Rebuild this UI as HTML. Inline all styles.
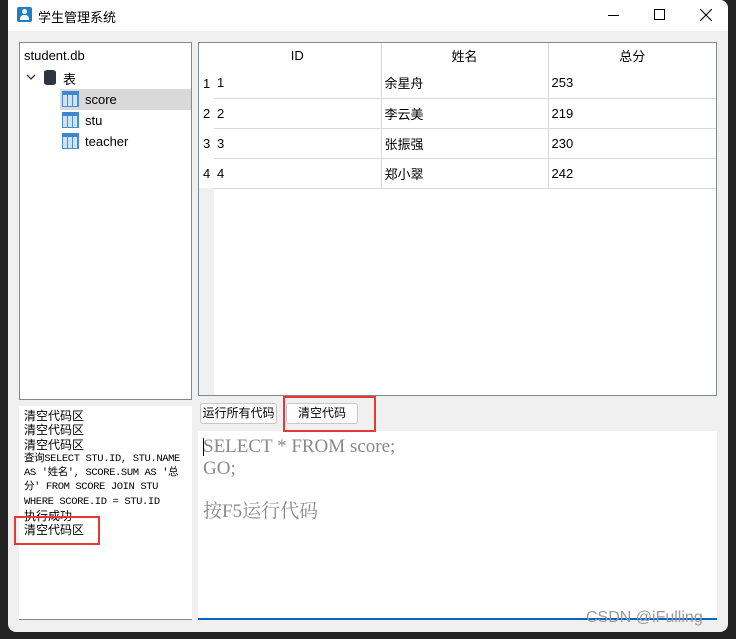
<!DOCTYPE html><html><head><meta charset="utf-8"><style>
*{margin:0;padding:0;box-sizing:border-box}
body{width:736px;height:639px;background:#232323;position:relative;overflow:hidden;font-family:"Liberation Sans","Noto Sans CJK SC",sans-serif;font-size:13px;color:#000}
.win{position:absolute;left:8px;top:0;width:720px;height:632px;background:#f0f0f0;border-radius:0 8px 8px 8px}
.title{position:absolute;left:0;top:0;width:720px;height:31px;background:#fff;border-radius:0 8px 0 0}
.a{position:absolute}
.mono div{height:14.25px;line-height:14.25px;white-space:nowrap;font-size:12px}
.mono div.m{font-family:"Liberation Mono","Noto Sans CJK SC",monospace;font-size:10.5px;letter-spacing:-0.4px}
.red{position:absolute;border:2px solid #e83737}
table{border-collapse:collapse}
</style></head><body>
<div class="win">
<div class="title">
 <div class="a" style="left:9px;top:7px;width:15px;height:15px;background:#1e7fc4;border-radius:2px"><div class="a" style="left:5px;top:2px;width:5px;height:5px;background:#fff;border-radius:50%"></div><div class="a" style="left:3px;top:8px;width:9px;height:5px;background:#fff;border-radius:4px 4px 0 0"></div></div>
 <div class="a" style="left:30px;top:7px;font-size:13px">学生管理系统</div>
 <div class="a" style="left:600px;top:15px;width:11px;height:1px;background:#000"></div>
 <div class="a" style="left:646px;top:9px;width:11px;height:11px;border:1px solid #000"></div>
 <svg class="a" style="left:692px;top:9px" width="12" height="12"><path d="M0 0L12 12M12 0L0 12" stroke="#000" stroke-width="1.1"/></svg>
</div>
</div>
<!-- tree -->
<div class="a" style="left:19px;top:42px;width:173px;height:358px;background:#fff;border:1px solid #828790">
 <div class="a" style="left:4px;top:5px">student.db</div>
 <svg class="a" style="left:6px;top:31px" width="10" height="6"><path d="M1 1L5 5L9 1" stroke="#333" fill="none" stroke-width="1.3"/></svg>
 <div class="a" style="left:24px;top:27px;width:12px;height:15px;background:#2d3440;border-radius:4px/2px"></div>
 <div class="a" style="left:43px;top:26px">表</div>
 <div class="a" style="left:40px;top:46px;width:131px;height:21px;background:#d9d9d9"></div>
 <div class="a" style="left:42px;top:48px;width:17px;height:16px;border:1px solid #4a8fd4;background:repeating-linear-gradient(90deg,#cfe3f7 0 4px,#4a8fd4 4px 5px);border-top:4px solid #3f86d0"></div><div class="a" style="left:65px;top:49px">score</div>
 <div class="a" style="left:42px;top:69px;width:17px;height:16px;border:1px solid #4a8fd4;background:repeating-linear-gradient(90deg,#cfe3f7 0 4px,#4a8fd4 4px 5px);border-top:4px solid #3f86d0"></div><div class="a" style="left:65px;top:70px">stu</div>
 <div class="a" style="left:42px;top:90px;width:17px;height:16px;border:1px solid #4a8fd4;background:repeating-linear-gradient(90deg,#cfe3f7 0 4px,#4a8fd4 4px 5px);border-top:4px solid #3f86d0"></div><div class="a" style="left:65px;top:91px">teacher</div>
</div>
<!-- table -->
<div class="a" style="left:198px;top:42px;width:519px;height:354px;background:#fff;border:1px solid #828790">
 <div class="a" style="left:0;top:0;width:15px;height:352px;background:#f0f0f0"></div>
 <div class="a" style="left:0;top:0;width:15px;height:145px;background:#fff"></div>
 <div class="a" style="left:4px;top:26px;font-size:13px;line-height:30px">1<br>2<br>3<br>4</div>
 <table class="a" style="left:15px;top:0;width:502px">
  <tr style="height:25px"><td style="width:167px;text-align:center;border-right:1px solid #d8d8d8">ID</td><td style="width:167px;text-align:center;border-right:1px solid #d8d8d8">姓名</td><td style="text-align:center">总分</td></tr>
  <tr style="height:30px;border-bottom:1px solid #d8d8d8"><td style="padding-left:3px;border-right:1px solid #d8d8d8">1</td><td style="padding-left:3px;border-right:1px solid #d8d8d8">余星舟</td><td style="padding-left:3px">253</td></tr>
  <tr style="height:30px;border-bottom:1px solid #d8d8d8"><td style="padding-left:3px;border-right:1px solid #d8d8d8">2</td><td style="padding-left:3px;border-right:1px solid #d8d8d8">李云美</td><td style="padding-left:3px">219</td></tr>
  <tr style="height:30px;border-bottom:1px solid #d8d8d8"><td style="padding-left:3px;border-right:1px solid #d8d8d8">3</td><td style="padding-left:3px;border-right:1px solid #d8d8d8">张振强</td><td style="padding-left:3px">230</td></tr>
  <tr style="height:30px;border-bottom:1px solid #d8d8d8"><td style="padding-left:3px;border-right:1px solid #d8d8d8">4</td><td style="padding-left:3px;border-right:1px solid #d8d8d8">郑小翠</td><td style="padding-left:3px">242</td></tr>
 </table>
</div>
<!-- log -->
<div class="a mono" style="left:19px;top:406px;width:173px;height:214px;background:#fff;border-bottom:1px solid #828790;padding:3px 0 0 5px;overflow:hidden">
<div>清空代码区</div><div>清空代码区</div><div>清空代码区</div>
<div class="m">查询SELECT STU.ID, STU.NAME</div>
<div class="m">AS '姓名', SCORE.SUM AS '总</div>
<div class="m">分' FROM SCORE JOIN STU</div>
<div class="m">WHERE SCORE.ID = STU.ID</div>
<div>执行成功</div><div>清空代码区</div></div>
<!-- buttons -->
<div class="a" style="left:200px;top:403px;width:77px;height:21px;background:#fdfdfd;border:1px solid #c8c8c8;border-radius:3px;font-size:12px;text-align:center;line-height:19px">运行所有代码</div>
<div class="a" style="left:286px;top:403px;width:72px;height:21px;background:#fdfdfd;border:1px solid #c8c8c8;border-radius:3px;font-size:12px;text-align:center;line-height:19px">清空代码</div>
<!-- editor -->
<div class="a" style="left:198px;top:431px;width:519px;height:189px;background:#fff;border-bottom:2px solid #0a64c2;font-family:'Liberation Serif','Noto Serif CJK SC',serif;font-size:19px;color:#8a8a8a;line-height:21.5px;padding:5px 0 0 5px">SELECT * FROM score;<br>GO;<br><br>按F5运行代码</div>
<div class="a" style="left:203px;top:438px;width:1px;height:18px;background:#000"></div>
<div class="red" style="left:283px;top:396px;width:93px;height:36px"></div>
<div class="red" style="left:14px;top:516px;width:86px;height:29px"></div>
<div class="a" style="left:586px;top:609px;font-size:16px;color:#999">CSDN @iFulling</div>
</body></html>
